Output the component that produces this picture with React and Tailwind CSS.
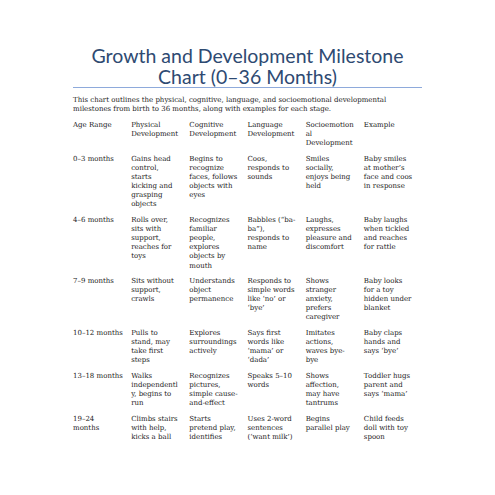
import React from 'react'

// each cell is written line by line, as it wraps in the chart
const headers = [
  ['Age Range'],
  ['Physical', 'Development'],
  ['Cognitive', 'Development'],
  ['Language', 'Development'],
  ['Socioemotion', 'al', 'Development'],
  ['Example'],
]

const rows = [
  [
    ['0–3 months'],
    ['Gains head', 'control,', 'starts', 'kicking and', 'grasping', 'objects'],
    ['Begins to', 'recognize', 'faces, follows', 'objects with', 'eyes'],
    ['Coos,', 'responds to', 'sounds'],
    ['Smiles', 'socially,', 'enjoys being', 'held'],
    ['Baby smiles', 'at mother’s', 'face and coos', 'in response'],
  ],
  [
    ['4–6 months'],
    ['Rolls over,', 'sits with', 'support,', 'reaches for', 'toys'],
    ['Recognizes', 'familiar', 'people,', 'explores', 'objects by', 'mouth'],
    ['Babbles (“ba-', 'ba”),', 'responds to', 'name'],
    ['Laughs,', 'expresses', 'pleasure and', 'discomfort'],
    ['Baby laughs', 'when tickled', 'and reaches', 'for rattle'],
  ],
  [
    ['7–9 months'],
    ['Sits without', 'support,', 'crawls'],
    ['Understands', 'object', 'permanence'],
    ['Responds to', 'simple words', 'like ‘no’ or', '‘bye’'],
    ['Shows', 'stranger', 'anxiety,', 'prefers', 'caregiver'],
    ['Baby looks', 'for a toy', 'hidden under', 'blanket'],
  ],
  [
    ['10–12 months'],
    ['Pulls to', 'stand, may', 'take first', 'steps'],
    ['Explores', 'surroundings', 'actively'],
    ['Says first', 'words like', '‘mama’ or', '‘dada’'],
    ['Imitates', 'actions,', 'waves bye-', 'bye'],
    ['Baby claps', 'hands and', 'says ‘bye’'],
  ],
  [
    ['13–18 months'],
    ['Walks', 'independentl', 'y, begins to', 'run'],
    ['Recognizes', 'pictures,', 'simple cause-', 'and-effect'],
    ['Speaks 5–10', 'words'],
    ['Shows', 'affection,', 'may have', 'tantrums'],
    ['Toddler hugs', 'parent and', 'says ‘mama’'],
  ],
  [
    ['19–24', 'months'],
    ['Climbs stairs', 'with help,', 'kicks a ball'],
    ['Starts', 'pretend play,', 'identifies'],
    ['Uses 2-word', 'sentences', '(‘want milk’)'],
    ['Begins', 'parallel play'],
    ['Child feeds', 'doll with toy', 'spoon'],
  ],
]

function Cell({ lines }) {
  return (
    <div className="pb-[6.5px]">
      {lines.map((l, i) => (
        <div key={i} className="whitespace-nowrap">{l}</div>
      ))}
    </div>
  )
}

export default function App() {
  return (
    <div className="h-[495px] overflow-hidden bg-white px-[73px] pt-[45px] text-[#222] font-['DejaVu_Serif',serif]">
      {/* Title */}
      <h1 className="text-center text-[19.5px] leading-[21px] text-[#2e4a72] font-['Lato',sans-serif]">
        Growth and Development Milestone
        <br />
        Chart (0–36 Months)
      </h1>
      <div className="h-px bg-[#8eaadb]" />

      {/* Intro */}
      <p className="mt-[8px] text-[7px] leading-[9.1px]">
        This chart outlines the physical, cognitive, language, and socioemotional developmental milestones from birth to 36 months, along with examples for each stage.
      </p>

      {/* Table */}
      <div className="mt-[7px] grid grid-cols-6 text-[7px] leading-[9.1px]">
        {headers.map((h, i) => (
          <Cell key={i} lines={h} />
        ))}
        {rows.map((r, ri) => r.map((c, ci) => <Cell key={ri + '-' + ci} lines={c} />))}
      </div>
    </div>
  )
}
